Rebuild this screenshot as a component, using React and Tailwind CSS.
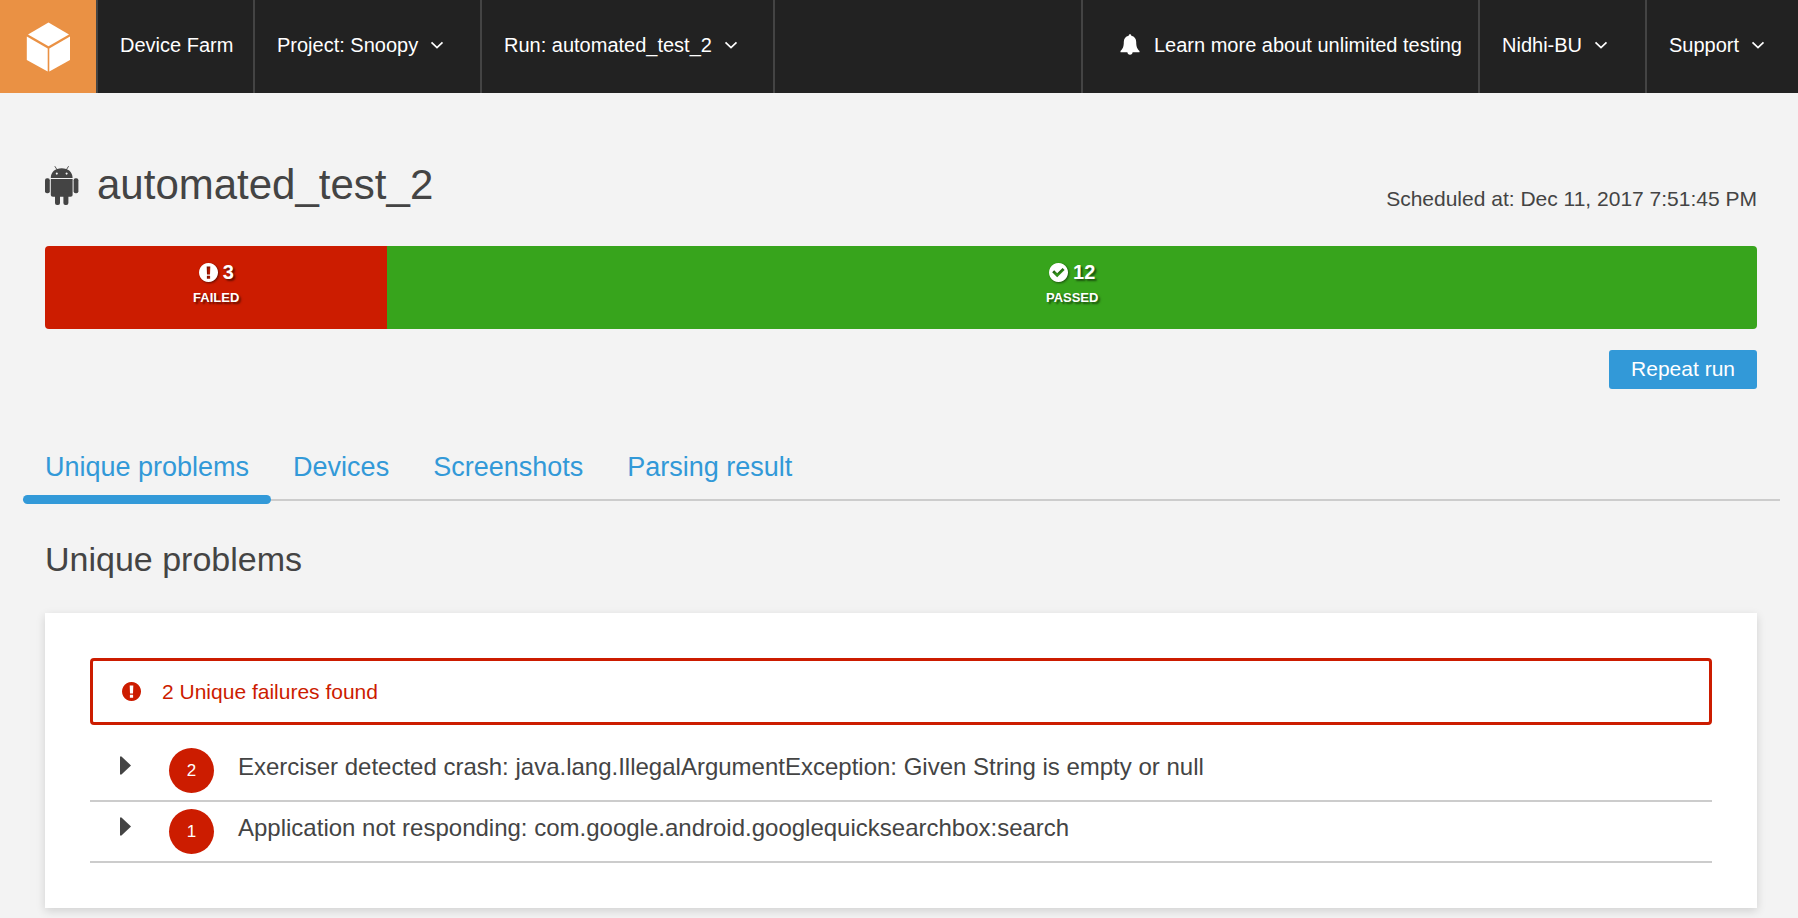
import React from "react";

function Chevron() {
  return (
    <svg width="14" height="10" viewBox="0 0 14 10" fill="none" className="shrink-0" aria-hidden="true">
      <path d="M1.500 2.300 L7 7.500 L12.500 2.300" stroke="#fff" strokeWidth="1.7" />
    </svg>
  );
}

function Cube() {
  return (
    <svg width="44" height="50" viewBox="0 0 44 50" fill="#fff" aria-hidden="true">
      <path d="M22.5 0.5 L43 12.500 L22.5 24.200 L2 12.500 Z" />
      <path d="M0.800 14.500 L21.700 26.400 V49.400 L0.800 38 Z" />
      <path d="M44 14.500 L23.300 26.400 V49.400 L44 38 Z" />
    </svg>
  );
}

function Android() {
  return (
    <svg width="34" height="40" viewBox="0 0 34 40" fill="#444" aria-hidden="true">
      <path d="M9.800 1.200 L12.200 5 M23.600 1.200 L21.200 5" stroke="#444" strokeWidth="0.900" />
      <path fillRule="evenodd" d="M5.800 13 C5.800 7 10.300 3.300 16.700 3.300 C23.100 3.300 27.600 7 27.600 13 Z M11.800 7.600 a1 1 0 1 0 0.010 0 Z M21.600 7.600 a1 1 0 1 0 0.010 0 Z" />
      <rect x="0" y="13.300" width="4.800" height="15" rx="2" />
      <rect x="28.600" y="13.300" width="4.800" height="15" rx="2" />
      <path d="M5.800 14 H27.600 V30 Q27.600 31.800 25.500 31.800 H7.900 Q5.800 31.800 5.800 30 Z" />
      <rect x="10" y="26" width="5" height="14" rx="2" />
      <rect x="18.400" y="26" width="5" height="14" rx="2" />
    </svg>
  );
}

function Bell() {
  return (
    <svg width="20" height="21" viewBox="0 0 20 21" fill="#fff" aria-hidden="true">
      <path d="M10 0.300 C10.800 0.300 11.300 0.900 11.300 1.700 C14.600 2.400 16.200 4.800 16.200 8 C16.200 13 17.400 15 19.500 17 V18.200 H0.500 V17 C2.600 15 3.800 13 3.800 8 C3.800 4.800 5.400 2.400 8.700 1.700 C8.700 0.900 9.200 0.300 10 0.300 Z" />
      <path d="M7.400 18 H12.600 C12.600 19.700 11.500 20.700 10 20.700 C8.500 20.700 7.400 19.700 7.400 18 Z" />
    </svg>
  );
}

function Alert({ className }) {
  return (
    <svg width="19" height="19" viewBox="0 0 19 19" className={className} aria-hidden="true">
      <path fill="currentColor" fillRule="evenodd" d="M9.500 0 a9.500 9.500 0 1 0 0.010 0 Z M7.700 3.500 H11.300 L11 11.500 H8 Z M7.900 12.800 H11.100 V15.700 H7.900 Z" />
    </svg>
  );
}

function Check({ className }) {
  return (
    <svg width="19" height="19" viewBox="0 0 19 19" className={className} aria-hidden="true">
      <path fill="currentColor" fillRule="evenodd" d="M9.500 0 a9.500 9.500 0 1 0 0.010 0 Z M3.200 9.300 L5.200 7.300 L8.200 10.300 L13.600 4.900 L15.600 6.900 L8.200 14.300 Z" />
    </svg>
  );
}

function NavMenu({ label }) {
  return (
    <button type="button" className="flex h-full w-full items-center gap-3 whitespace-nowrap pb-1 pl-[22px]">
      {label}
      <Chevron />
    </button>
  );
}

const segments = [
  { count: 3, label: "FAILED", Icon: Alert, color: "bg-[#cc1c00]" },
  { count: 12, label: "PASSED", Icon: Check, color: "bg-[#37a41c]" },
];

const tabs = ["Unique problems", "Devices", "Screenshots", "Parsing result"];

const problems = [
  { count: 2, text: "Exerciser detected crash: java.lang.IllegalArgumentException: Given String is empty or null" },
  { count: 1, text: "Application not responding: com.google.android.googlequicksearchbox:search" },
];

export default function App() {
  const total = segments.reduce((sum, s) => sum + s.count, 0);
  return (
    <div className="min-h-screen bg-[#f3f3f3] font-['Liberation_Sans',Arial,sans-serif] text-[#444]">
      <header className="flex h-[93px] bg-[#222] text-[20px] text-white">
        <a href="#home" aria-label="Home" className="flex w-24 shrink-0 items-center justify-center bg-[#ea9144]">
          <Cube />
        </a>
        <nav className="flex">
          <a href="#devicefarm" className="flex w-[157px] items-center whitespace-nowrap border-l-2 border-[#444] pb-1 pl-[22px]">
            Device Farm
          </a>
          <div className="w-[227px] border-l-2 border-[#444]">
            <NavMenu label="Project: Snoopy" />
          </div>
          <div className="w-[295px] border-x-2 border-[#444]">
            <NavMenu label="Run: automated_test_2" />
          </div>
        </nav>
        <nav className="ml-auto flex">
          <a href="#unlimited" className="flex w-[397px] items-center gap-[14px] whitespace-nowrap border-l-2 border-[#444] pb-1 pl-[37px]">
            <Bell />
            Learn more about unlimited testing
          </a>
          <div className="w-[167px] border-l-2 border-[#444]">
            <NavMenu label="Nidhi-BU" />
          </div>
          <div className="w-[153px] border-l-2 border-[#444]">
            <NavMenu label="Support" />
          </div>
        </nav>
      </header>

      <main className="pt-[60px] pb-[10px]">
        <section className="mr-[41px] ml-[45px]">
          <div className="flex items-end justify-between">
            <div className="flex items-center gap-[18px]">
              <Android />
              <h1 className="text-[42px] leading-[64px]">automated_test_2</h1>
            </div>
            <p className="text-[21px] leading-[36px]">Scheduled at: Dec 11, 2017 7:51:45 PM</p>
          </div>

          <div className="mt-[29px] flex h-[83px] overflow-hidden rounded text-white">
            {segments.map(({ count, label, Icon, color }) => (
              <div
                key={label}
                className={`flex flex-col items-center pt-[14px] font-bold [text-shadow:2px_2px_2px_rgba(0,0,0,0.5)] ${color}`}
                style={{ width: `${(count / total) * 100}%` }}
              >
                <div className="flex items-center gap-[5px] text-[20px] leading-6">
                  <Icon className="drop-shadow-[1px_1px_1px_rgba(0,0,0,0.5)]" />
                  {count}
                </div>
                <div className="mt-[5px] text-[13px] leading-[18px]">{label}</div>
              </div>
            ))}
          </div>

          <div className="mt-[21px] flex justify-end">
            <button type="button" className="h-[39px] rounded-[3px] bg-[#3299d8] px-[22px] pb-[2px] text-[21px] leading-[37px] text-white">
              Repeat run
            </button>
          </div>
        </section>

        <div className="relative mt-[46px] mr-[18px] ml-[23px]">
          <div className="absolute inset-x-0 bottom-[3px] h-[2px] bg-[#ccc]" />
          <div role="tablist" className="relative flex">
            {tabs.map((tab, i) => (
              <button
                key={tab}
                type="button"
                role="tab"
                aria-selected={i === 0}
                className="flex flex-col text-[27px] leading-[56px] text-[#3299d8]"
              >
                <span className="px-[22px] pt-1">{tab}</span>
                <span className={i === 0 ? "h-[9px] w-full rounded-full bg-[#3299d8]" : "h-[9px] w-full"} />
              </button>
            ))}
          </div>
        </div>

        <section className="mr-[41px] ml-[45px]">
          <h2 className="mt-[30px] text-[34px] leading-[50px]">Unique problems</h2>
          <div className="mt-[29px] bg-white p-[45px] shadow-[0_3px_9px_rgba(0,0,0,0.14)]">
            <div className="flex h-[67px] items-center gap-[21px] rounded border-[3px] border-[#cc1c00] pl-[29px] text-[21px] text-[#cc1c00]">
              <Alert />
              2 Unique failures found
            </div>
            <ul className="mt-4">
              {problems.map((p) => (
                <li key={p.text} className="border-b-2 border-[#ccc]">
                  <button type="button" className="flex h-[59px] w-full items-start pt-[7px] pl-[30px] text-left">
                    <svg width="11" height="19" viewBox="0 0 11 19" className="mt-2 shrink-0" aria-hidden="true">
                      <path d="M0 0.500 H1.500 L11 9.500 L1.500 18.500 H0 Z" fill="#444" />
                    </svg>
                    <span className="ml-[38px] flex size-[45px] shrink-0 items-center justify-center rounded-full bg-[#cc1c00] text-[17px] text-white">
                      {p.count}
                    </span>
                    <span className="ml-6 text-[24px] leading-[38px]">{p.text}</span>
                  </button>
                </li>
              ))}
            </ul>
          </div>
        </section>
      </main>
    </div>
  );
}
